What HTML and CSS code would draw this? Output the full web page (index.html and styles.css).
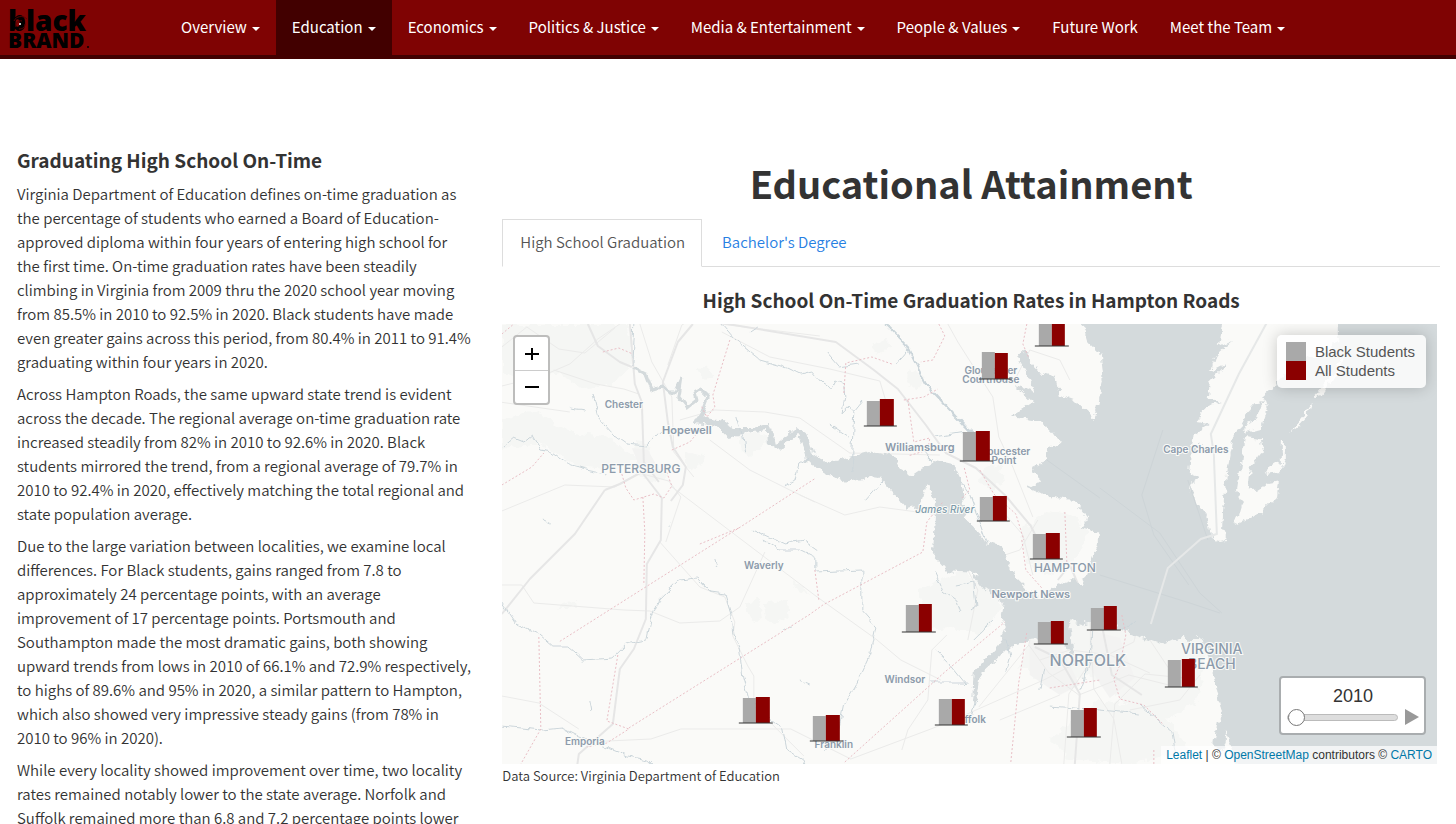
FILE: index.html
```html
<!DOCTYPE html>
<html lang="en">
<head>
<meta charset="utf-8">
<title>Educational Attainment</title>
<link rel="stylesheet" href="styles.css">
</head>
<body>
<header class="navbar">
  <a class="brand" href="#" aria-label="Black Brand">
    <svg width="84" height="44" viewBox="0 0 84 44">
      <text class="brand-top" x="2" y="25">black</text>
      <text class="brand-bottom" x="2" y="42">BRAND</text>
      <path class="brand-swirl" d="M8 15c2-5 9-6 13-2M10 21c-1-4 2-7 6-6M13 23c4 0 6-2 6-5"/>
      <circle class="brand-dot" cx="14" cy="18" r="1"/>
      <circle cx="82" cy="41" r="1"/>
    </svg>
  </a>
  <nav class="nav">
    <a class="nav-link" href="#">Overview <span class="caret"></span></a>
    <a class="nav-link active" href="#">Education <span class="caret"></span></a>
    <a class="nav-link" href="#">Economics <span class="caret"></span></a>
    <a class="nav-link" href="#">Politics &amp; Justice <span class="caret"></span></a>
    <a class="nav-link" href="#">Media &amp; Entertainment <span class="caret"></span></a>
    <a class="nav-link" href="#">People &amp; Values <span class="caret"></span></a>
    <a class="nav-link" href="#">Future Work</a>
    <a class="nav-link" href="#">Meet the Team <span class="caret"></span></a>
  </nav>
</header>
<main class="page">
  <section class="story">
    <h2 class="story-title">Graduating High School On-Time</h2>
    <p>Virginia Department of Education defines on-time graduation as the percentage of students who earned a Board of Education-approved diploma within four years of entering high school for the first time. On-time graduation rates have been steadily climbing in Virginia from 2009 thru the 2020 school year moving from 85.5% in 2010 to 92.5% in 2020. Black students have made even greater gains across this period, from 80.4% in 2011 to 91.4% graduating within four years in 2020.</p>
    <p>Across Hampton Roads, the same upward state trend is evident across the decade. The regional average on-time graduation rate increased steadily from 82% in 2010 to 92.6% in 2020. Black students mirrored the trend, from a regional average of 79.7% in 2010 to 92.4% in 2020, effectively matching the total regional and state population average.</p>
    <p>Due to the large variation between localities, we examine local differences. For Black students, gains ranged from 7.8 to approximately 24 percentage points, with an average improvement of 17 percentage points. Portsmouth and Southampton made the most dramatic gains, both showing upward trends from lows in 2010 of 66.1% and 72.9% respectively, to highs of 89.6% and 95% in 2020, a similar pattern to Hampton, which also showed very impressive steady gains (from 78% in 2010 to 96% in 2020).</p>
    <p>While every locality showed improvement over time, two locality rates remained notably lower to the state average. Norfolk and Suffolk remained more than 6.8 and 7.2 percentage points lower</p>
  </section>
  <section class="charts">
    <h1 class="title">Educational Attainment</h1>
    <nav class="tabs">
      <a class="tab selected" href="#">High School Graduation</a>
      <a class="tab" href="#">Bachelor's Degree</a>
    </nav>
    <h2 class="map-title">High School On-Time Graduation Rates in Hampton Roads</h2>
    <div class="map">
      <svg class="map-canvas" viewBox="502 324 935 440" preserveAspectRatio="xMidYMid slice">
        <defs>
          <filter id="coast" x="-5%" y="-5%" width="110%" height="110%">
            <feTurbulence type="fractalNoise" baseFrequency="0.13" numOctaves="3" seed="4"/>
            <feDisplacementMap in="SourceGraphic" scale="9" xChannelSelector="R" yChannelSelector="G"/>
          </filter>
          <filter id="stream" x="-5%" y="-5%" width="110%" height="110%">
            <feTurbulence type="fractalNoise" baseFrequency="0.1" numOctaves="2" seed="9"/>
            <feDisplacementMap in="SourceGraphic" scale="7" xChannelSelector="R" yChannelSelector="G"/>
          </filter>
        </defs>
        <rect class="land" x="502" y="324" width="935" height="440"/>
        <g class="woods" filter="url(#coast)">
          <path d="M502 324h125l8 35-22 25-30 6-25-18-30 8-26-8z"/>
          <path d="M502 420l30-10 40 22 34 4 30 22-20 12-40-4-34-22-40 5z"/>
          <path d="M636 440l12 2 6 22 14 12-12 6-18-8z"/>
          <path d="M697 370l10-5 6 10-8 5zM686 452l18 4-8 14-10-2zM738 436l20-4 12 8-20 16-8-4z"/>
          <path d="M745 603l14-4 3 20-8 4zM763 604l24-4 2 18-14 6-10-6z"/>
          <path d="M920 590l40-18 30 10 12 24-20 28-30-6-24 2z"/>
          <path d="M910 368l14 8-6 14-12-8zM870 345l14-6 8 8-14 8zM982 470l18-6 4 18-14 8-10-8z"/>
          <path d="M1020 530l30-20 24 6 14 16-10 26-30 18-20-12zM1082 610l50 12 60-4 14 20-6 60-30 20-40-12-40-30-40 10-30-20 10-25z"/>
          <path d="M1100 700l60 10 30 40-60 14-60-5-20-20z"/>
          <path d="M563 604l14-3 1 7h-20zM792 582l12 4 4 8-10-2z"/>
        </g>
        <g class="urban">
          <path d="M632 448l16 2 8 14-14 8zM1030 640l30 5 20 40-20 10-30-20zM1090 630l30 8 15 40-25 20-20-30z"/>
        </g>
        <g class="roads">
          <path d="M502 347l25-20 32 22 26 4 30-25M502 386l40-10 28-12 28-25 22-15M554 370l42 14 28 5 15 5M570 412l-70-10"/>
          <path d="M502 511l63-26 50 2 24-14 30 8 12 16-15 45M671 486l145 110 60 43 25 21 40 20"/>
          <path d="M502 585l20 0 12 18 90 7 26 1 30 12 40-2 20-14 25-55M660 542l40 45 25 10 10 25-2 14 15 30 6 10v30l50 50"/>
          <path d="M502 696l37 7 40 26M586 742l65-3 30-10 110 0 20 10 40 20 40-15 40-15 25-10 90-40 34-18"/>
          <path d="M640 324l12 38 20 35 2 55 20 25M680 420l35-10 50 2 35 6 50 35 90 2M710 440l40 30 40 20 25 12M668 365l14-40 18-10"/>
          <path d="M722 332l48 25 60 12 50 12 6 20M720 324l100 12M948 324l10 18 35 55 6 40 14 30 20 50M1015 380l15-30 30 10 10 20"/>
          <path d="M800 495l45 20 35-8 60 8M902 750l6-20 20-30 4-50 15-15M968 640l10-50-20-40M1064 764l5-70 20-30 45-22 10-40M1110 764l5-60 30-30 50 5"/>
          <path d="M1029 645l20 28 30 22 50-20 40 10M1049 590l-15 30-5 25-50 62M1000 720l60-25M1033 575l-10-40-30-35"/>
          <path d="M1122 764l-8-45-20-30-4-70M1150 640l20 30 30 20M1130 710l50-10 20-25M1040 660l30-10 40 5 40 18M990 560l30-10 18-30"/>
        </g>
        <g class="highways">
          <path d="M588 324l10 22 22 16 12 5M502 614l28-35 45-45 30-44M605 490l15-6 22-12 20 26-1 42-14 24-1 55-12 30-14 20-7 55-34 30-5 35M630 324l5 60 7 18 2 60 15 20"/>
          <path d="M693 324l-15 18-15 40 5 40 5 25 13 20-3 18-12 16"/>
          <path d="M722 323l114 19 38 28 24 19 28 36 20 28 30 15 30 28 25 30 10 20M1075 764l5-70-20-35-25-12"/>
          <path d="M1058 580l12-15 6 14 10 24 16 22 10 50 30 20"/>
        </g>
        <g class="water" filter="url(#coast)">
          <path d="M1075 320l10 9 4 14 12 12 3 26-10 40-7-9-13-12-14-5-4-18-15-4-10-10-8-14-4 10 8 14 8 18-20-6 18 17-22 14 30 4 12 12 7 10-12 8-4 14-12 6 10 10-14 8 14 6 14 4 18 2 14 19-6 9 16 5v10l-8 20-8 22-8-6-19 7-15 12-9-6-18-18-12-28-16-5-18-22-6-40-8-15-18-4-22 15-14-7-6-12-20-5L837 461 827 463 813 453 807 433 797 427 775 445 773 433 770 423 750 427 733 427 723 420 697 415 694 423 710 425 722 432 730 439 747 433 767 430 768 443 780 451 798 435 802 445 807 462 827 472 843 482l24-5 14 1 12 14 14 17 12-2 4-14 5-8 7 12v22l-2 36 14 16 26 2 10 14 20 16-2 12 6 12-8 18-14 15-10 11-2 32 4-1 4-28 18-16 12-12 18-6 30-2 8 10 8 14-4-22-2-20 12 4 18-4 20 9 20 7 26 9 24-11 12 3 6 14 7 27 8 40 14 43 8 25h210V320z"/>
          <path d="M1218 721l8-2v22l-4 12-8-6zM1180 630l12 2 8 8-10 0z"/>
        </g>
        <path class="meander" filter="url(#stream)" d="M634 368l12 6 6 16 10-3 6 5h8l6-14-3 20 8 10 10-8-2-8 6-3 7 7-6 16-4 8"/>
        <g class="shore" filter="url(#coast)">
          <path d="M1224 320l-5 26 14-6-16 14-5 18 16-8-18 18-2 16 14 4-14 4-12 16 14 2-16 12-3 10 14-2-14 10-2 20 10 4-8 6 2 12 14 20 3 22 12-6 2-32 4-32 6-32 10-20 18-20 14-12 26-26 20-2 16-16V320z"/>
          <path d="M1245 437l16 2 2 12-12 16-2 20 8 4 12-8 10-2-2 16-16 16-18 8-10 5 6-10 4-14-6-12 4-24z"/>
          <path d="M1243 426l14-6 6-18-10 2 3-7 7 0 4 12-6 20-15 4zM1266 468l10-6 8 4-4 6-12 2zM1282 441l4 0 0 18-4 10zM1290 432l12-14 10-16-4 12-10 12zM1313 398l12-14 20-30-4 14-20 28z"/>
          <circle cx="1220" cy="535" r="7"/>
        </g>
        <g class="ferry">
          <path d="M1163 430l-21 65 12 40 35 50M1100 488l60 45 40 60 22 20M1188 480l20 60M1100 575l90 28 30 10M1047 460l53 38"/>
        </g>
        <path class="bridge" d="M1151 624l17-56 33-29 16-5-3-80-3-20 28-60 30-55"/>
        <g class="streams" filter="url(#stream)">
          <path d="M502 448l12-10 10 4 8-6 8 14 12 2 20 14 14 4 20 4M593 394l6 24 14 16 14 10 20 2 14-14M634 324l-2 42"/>
          <path d="M722 324l14 16 24 20 28 8 12 6 12-3 10 12 10 6 4-8 8 3 1 14-3 16 8-8 4 6-2 40 0 20M736 416l6 20 3 18"/>
          <path d="M813 456l-14 8-4 16-10 6M752 530l18 8 14 6 20-4 14 10M826 352l12 14 20-3M830 424l18 12"/>
          <path d="M502 602l15 22 22 10 14 12 14 0 16 14 30-2 14-14 20-4 4-20 8-20 20-20 18-2 14 14 14 2 6 20 2 20 6 12 4 30 6 22 20 20 14 10 4 22 16 10 8 16"/>
          <path d="M502 726l40 4 20-2 16 8 20 8 30 12 20 4 8 8M764 540l16 10 20 0 16 8v14l46-2v40l14 16-6 28-14 30-12 20-6 30-14 18"/>
          <path class="wide" d="M886 324l20 20 20 40 46 50"/>
          <path d="M862 400l-8 10M935 436l36-6M930 460l-12-14M896 364l12-14M866 500l16-18M960 480l10 14 18 50"/>
          <path d="M935 572l8 18 14 10 4 12M955 586l20-4 2 24-6 4M936 650l14 14 16 20M930 682l38 0M974 640l20-20M1006 640l4 16-4 14M1085 680l2-20M1050 706l50 4 40 4M1140 704l16 14 16 14 4 24M1040 690l4-22M1080 690l10-26 2-36M970 720l6-20M1124 630l10-10"/>
          <path d="M571 408l14 2M750 332l6-4M543 520l8 4M714 560l2 6M784 630l8-4M800 680l10 4M590 700l2 10M669 527l1-4"/>
        </g>
        <g class="borders">
          <path d="M730 340l-17 55 2 12-8 10-6-12M739 528l77-50M700 544l39-16-180 114M643 497l2 35-1 53M622 474l4 14 8 12 20-6 10 4 8-12-6-16M502 485l30-18 12-14"/>
          <path d="M502 334l12-10M603 352l16-4 14 6M672 450l18-8 10-12M539 637l2 92-20 35M618 655l-11 66 22 8-22 14-20 4M629 728l180-113 14-10 100-53 4-30 16-20"/>
          <path d="M939 324l6 12-12 24-12 2M892 364l-20-7-26 6-2 30M904 400l20-3 14-8M908 400l6 42 16-4-2 12-20 6"/>
          <path d="M815 570l4 30M845 762l100-90 60-50M1011 762l8-80 8-50M1027 324l-4 20 6 14M1065 512l2 50M1022 540l4 30 16 18M1050 688l50-8M1122 615l4 20-6 30-6 14 6 20 24 6 20 20M1154 750v14M962 498l8-8-6-24M980 470l14 24 22 20 8 26"/>
        </g>
        <g class="places">
          <text class="town" x="624" y="408">Chester</text>
          <text class="town big" x="687" y="434">Hopewell</text>
          <text class="city" x="641" y="473">PETERSBURG</text>
          <text class="town" x="764" y="569">Waverly</text>
          <text class="town" x="585" y="745">Emporia</text>
          <text class="town" x="991" y="374">Gloucester</text>
          <text class="town" x="991" y="383">Courthouse</text>
          <text class="town big" x="920" y="451">Williamsburg</text>
          <text class="town" x="1004" y="455">Gloucester</text>
          <text class="town" x="1004" y="464">Point</text>
          <text class="river" x="945" y="513">James River</text>
          <text class="city" x="1065" y="572">HAMPTON</text>
          <text class="town big" x="1031" y="598">Newport News</text>
          <text class="metro" x="1088" y="666">NORFOLK</text>
          <text class="city large" x="1212" y="654">VIRGINIA</text>
          <text class="city large" x="1212" y="669">BEACH</text>
          <text class="town" x="905" y="683">Windsor</text>
          <text class="town" x="969" y="723">Suffolk</text>
          <text class="town" x="834" y="748">Franklin</text>
          <text class="town" x="1196" y="453">Cape Charles</text>
        </g>
        <g class="bars">
          <path class="black" d="M1039 320h13v26h-13zM982 352h13v27h-13zM867 401h13v25h-13zM963 432h13v29h-13zM980 497h13v24h-13zM1033 534h13v25h-13zM906 605h13v27h-13zM1038 622h13v22h-13zM1091 608h13v22h-13zM1168 660h13v27h-13zM1071 710h13v27h-13zM939 699h13v26h-13zM813 716h13v25h-13zM743 698h13v25h-13z"/>
          <path class="all" d="M1052 320h13v26h-13zM995 353h13v26h-13zM880 399h14v27h-14zM976 431h14v30h-14zM993 496h14v25h-14zM1046 533h14v26h-14zM919 604h13v28h-13zM1051 621h13v23h-13zM1104 606h13v24h-13zM1182 659h13v28h-13zM1084 708h13v29h-13zM952 699h13v26h-13zM826 715h14v26h-14zM756 697h14v26h-14z"/>
          <path class="axis" d="M1035 346h34M979 379h33M864 426h33M960 461h33M977 521h33M1030 559h33M902 632h34M1034 644h34M1087 630h34M1165 687h33M1067 737h34M935 725h33M810 741h33M739 723h34"/>
        </g>
      </svg>
      <div class="zoom">
        <button class="zoom-btn" type="button" aria-label="Zoom in"><svg width="14" height="14" viewBox="0 0 14 14"><path d="M7 1v12M0 7h14"/></svg></button>
        <button class="zoom-btn" type="button" aria-label="Zoom out"><svg width="14" height="14" viewBox="0 0 14 14"><path d="M0 7h14"/></svg></button>
      </div>
      <ul class="legend">
        <li><span class="swatch black-students"></span>Black Students</li>
        <li><span class="swatch all-students"></span>All Students</li>
      </ul>
      <div class="timeline">
        <label class="year" for="year">2010</label>
        <div class="timeline-row">
          <input class="slider" id="year" type="range" min="2010" max="2020" value="2010">
          <button class="play" type="button" aria-label="Play"><svg width="14" height="16" viewBox="0 0 14 16"><path d="M0 0l14 8-14 8z"/></svg></button>
        </div>
      </div>
      <div class="credit"><a href="#">Leaflet</a> | © <a href="#">OpenStreetMap</a> contributors © <a href="#">CARTO</a></div>
    </div>
    <p class="source">Data Source: Virginia Department of Education</p>
  </section>
</main>
</body>
</html>
```
FILE: styles.css
```css
* { box-sizing: border-box; }
body {
  margin: 0;
  height: 100vh;
  overflow: hidden;
  background: #fff;
  color: #333;
  font: 350 15px/24px "Noto Sans CJK SC", "Open Sans", sans-serif;
}
a { text-decoration: none; }

.navbar {
  display: flex;
  height: 59px;
  background: #7f0303;
  border-bottom: 4px solid #420000;
}
.brand { width: 165px; padding: 6px; }
.brand svg { overflow: visible; }
.brand-top { font: 800 28px "Open Sans", sans-serif; }
.brand-bottom { font: 800 21px "Open Sans", sans-serif; }
.brand-swirl { fill: none; stroke: #5a0202; stroke-width: 1; }
.brand-dot { fill: #fff; }
.nav { display: flex; font-weight: 400; }
.nav-link {
  display: flex;
  align-items: center;
  gap: 5px;
  padding: 0 16px 2px;
  color: #fff;
}
.nav-link.active { background: #420000; }
.caret {
  border: 4px solid transparent;
  border-top-color: currentColor;
  border-bottom: 0;
  margin-top: 4px;
}

.page { display: grid; grid-template-columns: 1fr 2fr; }
.story { padding: 87px 13px 0 17px; }
.charts { padding: 94px 16px 0 17px; }
p { margin: 0 0 8px; }
.story-title, .map-title { margin: 0; font-size: 19px; line-height: 28px; }
.story-title { margin-bottom: 8px; }
.title { margin: 0; font-size: 38px; line-height: 60px; text-align: center; }

.tabs { display: flex; margin-top: 6px; border-bottom: 1px solid #ddd; }
.tab {
  margin-bottom: -1px;
  padding: 10px 16px 12px 17px;
  border: 1px solid transparent;
  color: #2780e3;
}
.tab.selected { color: #555; background: #fff; border-color: #ddd #ddd #fff; margin-right: 2px; }
.map-title { margin: 19px 0 10px; text-align: center; }

.map {
  position: relative;
  height: 440px;
  margin-right: 3px;
  overflow: hidden;
  font: 12px/18px "Liberation Sans", sans-serif;
}
.map-canvas { display: block; width: 100%; height: 100%; }
.land { fill: #fafaf8; }
.water path { fill: #d4dadc; }
.meander { fill: none; stroke: #d4dadc; stroke-width: 3; }
.shore { fill: #fafaf8; }
.woods { fill: #f5f6f4; }
.urban { fill: #f3f3f2; }
.roads { fill: none; stroke: #ebebea; stroke-width: 1; }
.highways { fill: none; stroke: #e6e6e6; stroke-width: 2; stroke-linejoin: round; }
.streams { fill: none; stroke: #cbd5da; stroke-width: 1; }
.streams .wide { stroke-width: 2; }
.borders { fill: none; stroke: #e9bfc6; stroke-width: 1; stroke-dasharray: 2 2; }
.ferry { fill: none; stroke: #cdd4d7; stroke-width: 1; }
.bridge { fill: none; stroke: #e6e8e8; stroke-width: 2; }
.places text {
  text-anchor: middle;
  fill: #8c9bab;
  stroke: #fafaf8;
  stroke-width: 2px;
  paint-order: stroke;
  font-family: Inter, sans-serif;
  font-weight: 500;
}
.places .town { font-size: 10px; font-weight: 600; }
.places .big { font-size: 11px; }
.places .city { font-size: 12px; }
.places .large { font-size: 14px; }
.places .metro { font-size: 16px; }
.places .river { font-size: 10px; font-style: italic; fill: #7d9aaa; }
.bars .black { fill: #a9a9a9; }
.bars .all { fill: #8b0000; }
.bars .axis { stroke: #333; stroke-width: 1; }

.zoom {
  position: absolute;
  top: 11px;
  left: 11px;
  width: 37px;
  border: 2px solid #bdbdbc;
  border-radius: 4px;
  background: #fff;
}
.zoom-btn {
  display: grid;
  place-items: center;
  width: 100%;
  height: 33px;
  padding: 0;
  border: 0;
  background: none;
}
.zoom-btn + .zoom-btn { border-top: 1px solid #ccc; }
.zoom-btn path { stroke: #000; stroke-width: 2; }

.legend {
  position: absolute;
  top: 11px;
  right: 11px;
  margin: 0;
  padding: 7px 11px 8px 9px;
  list-style: none;
  border-radius: 5px;
  background: rgba(255, 255, 255, 0.8);
  box-shadow: 0 0 15px rgba(0, 0, 0, 0.2);
  color: #555;
  font-size: 15px;
  line-height: 19px;
}
.legend li { display: flex; gap: 9px; }
.swatch { width: 20px; }
.black-students { background: #a9a9a9; }
.all-students { background: #8b0000; }

.timeline {
  position: absolute;
  right: 11px;
  bottom: 29px;
  width: 147px;
  height: 59px;
  padding: 8px 5px 0 6px;
  border: 2px solid #a9adaf;
  border-radius: 4px;
  background: #fff;
  text-align: center;
}
.year { display: block; color: #333; font-size: 18px; line-height: 20px; }
.timeline-row { display: flex; align-items: center; gap: 7px; height: 22px; }
.slider { flex: 1; min-width: 0; height: 18px; margin: 0; appearance: none; background: none; }
.slider::-webkit-slider-runnable-track {
  height: 7px;
  border: 1px solid #bbb;
  border-radius: 4px;
  background: #ddd;
}
.slider::-webkit-slider-thumb {
  appearance: none;
  width: 17px;
  height: 17px;
  margin-top: -6px;
  border: 1px solid #777;
  border-radius: 50%;
  background: #fff;
}
.play { display: flex; padding: 0; border: 0; background: none; }
.play path { fill: #999; }
.credit {
  position: absolute;
  right: 0;
  bottom: 0;
  padding: 0 5px;
  background: rgba(255, 255, 255, 0.7);
  color: #333;
}
.credit a { color: #0078a8; }
.source { font-size: 13px; }
```
